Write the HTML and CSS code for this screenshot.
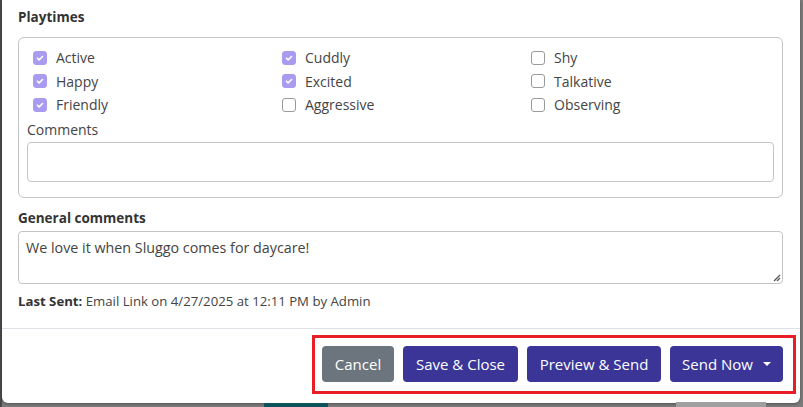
FILE: index.html
```html
<!DOCTYPE html>
<html>
<head>
<meta charset="utf-8">
<link rel="stylesheet" href="styles.css">
</head>
<body>
<div class="page">
  <div class="modal">
    <div class="modal-body">
      <div class="section-title">Playtimes</div>
      <div class="fieldset">
        <div class="check-grid">
          <label class="check"><span class="box on"><svg viewBox="0 0 14 14"><path d="M4 7.2l2 2 4-4" /></svg></span>Active</label>
          <label class="check"><span class="box on"><svg viewBox="0 0 14 14"><path d="M4 7.2l2 2 4-4" /></svg></span>Cuddly</label>
          <label class="check"><span class="box"></span>Shy</label>
          <label class="check"><span class="box on"><svg viewBox="0 0 14 14"><path d="M4 7.2l2 2 4-4" /></svg></span>Happy</label>
          <label class="check"><span class="box on"><svg viewBox="0 0 14 14"><path d="M4 7.2l2 2 4-4" /></svg></span>Excited</label>
          <label class="check"><span class="box"></span>Talkative</label>
          <label class="check"><span class="box on"><svg viewBox="0 0 14 14"><path d="M4 7.2l2 2 4-4" /></svg></span>Friendly</label>
          <label class="check"><span class="box"></span>Aggressive</label>
          <label class="check"><span class="box"></span>Observing</label>
        </div>
        <div class="field-label">Comments</div>
        <div class="input"></div>
      </div>
      <div class="section-title gc">General comments</div>
      <div class="textarea">We love it when Sluggo comes for daycare!<svg class="grip" viewBox="0 0 10 10"><path d="M9 3L3 9M9 6L6 9" /></svg></div>
      <div class="last-sent"><b>Last Sent:</b> Email Link on 4/27/2025 at 12:11 PM by Admin</div>
    </div>
    <div class="modal-footer">
      <div class="highlight">
        <button class="btn btn-gray">Cancel</button>
        <button class="btn btn-primary">Save &amp; Close</button>
        <button class="btn btn-primary">Preview &amp; Send</button>
        <button class="btn btn-primary">Send Now <span class="caret"></span></button>
      </div>
    </div>
  </div>
  <div class="behind">
    <span class="b-name">Santoro</span>
    <span class="b-teal"></span>
    <span class="b-today one">Today</span>
    <span class="b-today two">Today</span>
    <span class="b-days">&#9673; / days</span>
  </div>
</div>
</body>
</html>
```

FILE: styles.css
```css
html, body {
  margin: 0;
  padding: 0;
}
body {
  width: 803px;
  height: 407px;
  overflow: hidden;
  background: #7b7b7b;
  font-family: "Open Sans", "Noto Sans", "Liberation Sans", sans-serif;
  color: #444;
}
.page {
  display: flex;
  flex-direction: column;
  height: 407px;
  overflow: hidden;
  background: linear-gradient(to right, #4a4a4a 0, #4a4a4a 2px, #7b7b7b 2px);
}
.modal {
  margin-left: 2px;
  width: 798px;
  height: 403px;
  flex: none;
  background: #fff;
  border-radius: 0 0 6px 6px;
  display: flex;
  flex-direction: column;
  box-shadow: 0 1px 3px rgba(0,0,0,0.35);
}
.modal-body {
  padding: 6px 17px 0 16px;
  height: 322px;
  border-bottom: 1px solid #dee2e6;
}
.section-title {
  font-weight: 700;
  font-size: 13.5px;
  color: #333;
  line-height: 22px;
  height: 22px;
}
.fieldset {
  margin-top: 9px;
  border: 1px solid #c4c4c4;
  border-radius: 6px;
  padding: 8px 8px 15px 8px;
}
.check-grid {
  display: grid;
  grid-template-columns: repeat(3, 1fr);
  grid-auto-rows: 23.5px;
}
.check {
  display: flex;
  align-items: center;
  gap: 9px;
  padding-left: 6px;
  font-size: 14px;
  color: #444;
}
.box {
  width: 12px;
  height: 12px;
  border: 1px solid #9a9a9a;
  border-radius: 3px;
  background: #fff;
  display: flex;
}
.box.on {
  background: #a99bf0;
  border-color: #a99bf0;
}
.box svg {
  width: 12px;
  height: 12px;
  fill: none;
  stroke: #fff;
  stroke-width: 1.8;
  stroke-linecap: round;
  stroke-linejoin: round;
}
.field-label {
  font-size: 14px;
  line-height: 22px;
  margin-top: 2.5px;
  color: #444;
}
.input {
  margin-top: 1px;
  height: 38px;
  border: 1px solid #c4c4c4;
  border-radius: 4px;
}
.section-title.gc {
  margin-top: 9px;
}
.textarea {
  position: relative;
  margin-top: 2px;
  border: 1px solid #c4c4c4;
  border-radius: 4px;
  padding: 3px 7px 0;
  box-sizing: border-box;
  height: 53px;
  font-size: 14.3px;
  line-height: 25px;
  color: #444;
}
.grip {
  position: absolute;
  right: 1px;
  bottom: 1px;
  width: 10px;
  height: 10px;
  fill: none;
  stroke: #555;
  stroke-width: 1.3;
}
.last-sent {
  margin-top: 6px;
  font-size: 13.2px;
  line-height: 22px;
  color: #444;
}
.last-sent b {
  color: #333;
}
.modal-footer {
  display: flex;
  justify-content: flex-end;
  padding: 6px 4px 0 0;
}
.highlight {
  display: flex;
  gap: 9px;
  border: 3px solid #e81d25;
  padding: 8px 10px 9px 7px;
}
.btn {
  height: 36px;
  border: none;
  border-radius: 4px;
  color: #fff;
  font-family: "Open Sans", "Noto Sans", "Liberation Sans", sans-serif;
  font-size: 15px;
  padding: 0 12px;
  display: flex;
  align-items: center;
  justify-content: center;
}
.btn-gray {
  background: #6c757d;
  width: 72px;
}
.btn-primary {
  background: #3a3597;
}
.btn-primary:nth-child(2) { width: 115px; }
.btn-primary:nth-child(3) { width: 134px; }
.btn-primary:nth-child(4) { width: 113px; }
.caret {
  margin-left: 10px;
  width: 0;
  height: 0;
  border-left: 4px solid transparent;
  border-right: 4px solid transparent;
  border-top: 4px solid #fff;
}
.behind {
  position: relative;
  height: 4px;
  flex: none;
  font-size: 15px;
  color: #111;
}
.behind span {
  position: absolute;
  top: -1px;
  line-height: 20px;
}
.b-name { left: 1px; font-weight: 700; }
.b-teal { left: 264px; width: 64px; height: 10px; background: #0c555c; top: 0 !important; }
.b-today.one { left: 490px; font-weight: 700; color: #222; }
.b-today.two { left: 575px; font-weight: 700; color: #222; }
.b-days { left: 676px; width: 84px; background: #a0a0a0; padding-left: 6px; font-size: 13px; }
```
